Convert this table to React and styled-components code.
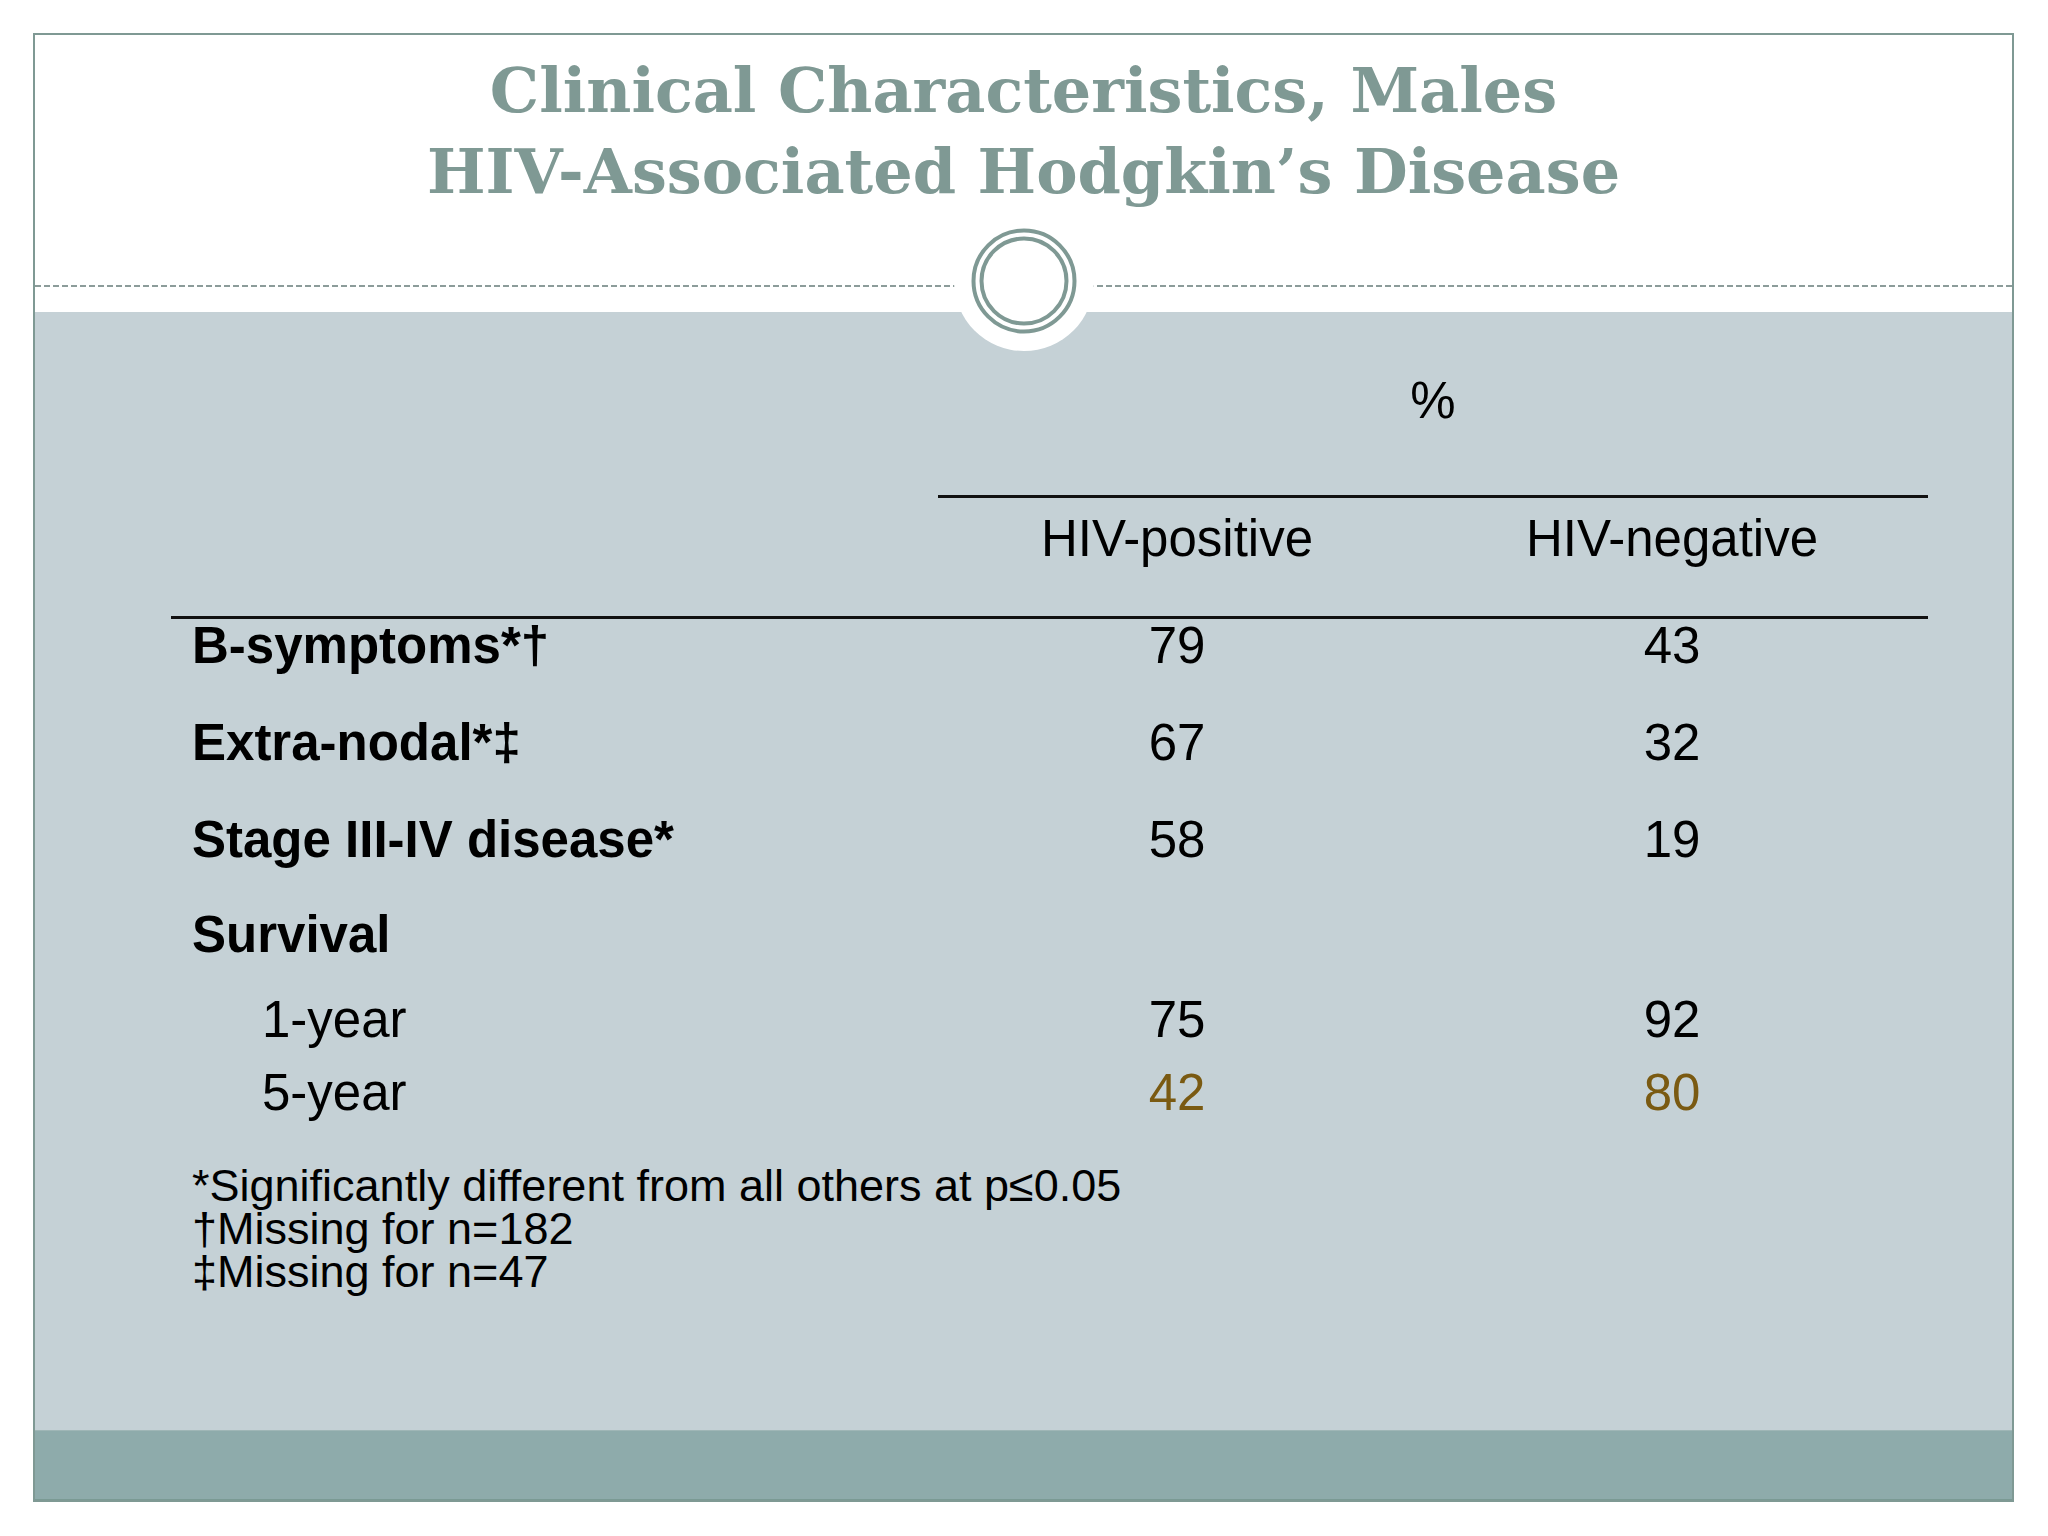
import React from "react";
import styled, { createGlobalStyle } from "styled-components";

const GlobalStyle = createGlobalStyle`
  html, body {
    margin: 0;
    padding: 0;
    background: #ffffff;
  }
  body {
    font-family: "Liberation Sans", Arial, sans-serif;
  }
`;

const rows = [
  { label: "B-symptoms*†", pos: "79", neg: "43", bold: true, gap: 0 },
  { label: "Extra-nodal*‡", pos: "67", neg: "32", bold: true, gap: 43 },
  { label: "Stage III-IV disease*", pos: "58", neg: "19", bold: true, gap: 43 },
  { label: "Survival", pos: "", neg: "", bold: true, gap: 41 },
  { label: "1-year", pos: "75", neg: "92", indent: true, gap: 31 },
  { label: "5-year", pos: "42", neg: "80", indent: true, gap: 19, accent: true },
];

const notes = [
  "*Significantly different from all others at p≤0.05",
  "†Missing for n=182",
  "‡Missing for n=47",
];

const Ornament = () => (
  <Disc>
    <svg width="140" height="140" viewBox="0 0 140 140">
      <circle cx="70" cy="70" r="50.5" fill="none" stroke="#7f9994" strokeWidth="4" />
      <circle cx="70" cy="70" r="42.5" fill="none" stroke="#7f9994" strokeWidth="4" />
    </svg>
  </Disc>
);

const App = () => {
  return (
    <>
      <GlobalStyle />
      <Slide>
        <Header>
          <Title>
            <span>Clinical Characteristics, Males</span>
            <span>HIV-Associated Hodgkin’s Disease</span>
          </Title>
          <Divider>
            <Ornament />
          </Divider>
        </Header>
        <Body>
          <Table>
            <Percent>%</Percent>
            <HeadCell />
            <HeadCell>HIV-positive</HeadCell>
            <HeadCell>HIV-negative</HeadCell>
            {rows.map((r) => (
              <React.Fragment key={r.label}>
                <Label $bold={r.bold} $indent={r.indent} $gap={r.gap}>
                  {r.label}
                </Label>
                <Value $gap={r.gap} $accent={r.accent}>
                  {r.pos}
                </Value>
                <Value $gap={r.gap} $accent={r.accent}>
                  {r.neg}
                </Value>
              </React.Fragment>
            ))}
          </Table>
          <Notes>
            {notes.map((n) => (
              <Note key={n}>{n}</Note>
            ))}
          </Notes>
        </Body>
        <Footer />
      </Slide>
    </>
  );
};

const Slide = styled.div`
  box-sizing: border-box;
  margin: 33px 0 0 33px;
  width: 1981px;
  height: 1469px;
  border: 2px solid #7f9994;
  display: flex;
  flex-direction: column;
  background: #ffffff;
`;

const Header = styled.header`
  position: relative;
  z-index: 1;
  height: 277px;
  display: flex;
  flex-direction: column;
  background: #ffffff;
`;

const Title = styled.h1`
  margin: 0;
  padding-top: 15px;
  display: flex;
  flex-direction: column;
  align-items: center;
  font-family: "DejaVu Serif", "Liberation Serif", serif;
  font-weight: 700;
  font-size: 62px;
  line-height: 81px;
  color: #7f9994;
`;

const Divider = styled.div`
  position: relative;
  margin-top: auto;
  margin-bottom: 25px;
  height: 2px;
  background-image: repeating-linear-gradient(
    to right,
    #8c9c9a 0,
    #8c9c9a 6px,
    transparent 6px,
    transparent 9px
  );
`;

const Disc = styled.div`
  position: absolute;
  left: 50%;
  top: -74px;
  width: 140px;
  height: 140px;
  margin-left: -70px;
  border-radius: 50%;
  background: #ffffff;
  svg {
    display: block;
  }
`;

const Body = styled.main`
  flex: 1;
  background: #c5d1d6;
  padding-left: 136px;
  color: #000000;
`;

const Table = styled.div`
  display: grid;
  grid-template-columns: 767px 478px 512px;
  font-size: 51px;
`;

const Percent = styled.div`
  grid-column: 2 / 4;
  margin-top: 62px;
  padding-bottom: 67px;
  line-height: 54px;
  text-align: center;
  border-bottom: 3px solid #111111;
`;

const HeadCell = styled.div`
  padding-top: 14px;
  padding-bottom: 50px;
  line-height: 54px;
  text-align: center;
  border-bottom: 3px solid #111111;
`;

const Label = styled.div`
  padding-top: ${(p) => p.$gap}px;
  padding-left: ${(p) => (p.$indent ? 91 : 21)}px;
  line-height: 54px;
  font-weight: ${(p) => (p.$bold ? 700 : 400)};
  white-space: nowrap;
`;

const Value = styled.div`
  padding-top: ${(p) => p.$gap}px;
  line-height: 54px;
  text-align: center;
  color: ${(p) => (p.$accent ? "#7a5a12" : "#000000")};
`;

const Notes = styled.div`
  margin: 44px 0 0 21px;
  font-size: 45px;
  line-height: 43px;
`;

const Note = styled.div``;

const Footer = styled.footer`
  height: 68px;
  background: #8eabab;
  border-top: 1px solid #9fb6b6;
  border-bottom: 1px solid #7a9a94;
`;

export default App;
